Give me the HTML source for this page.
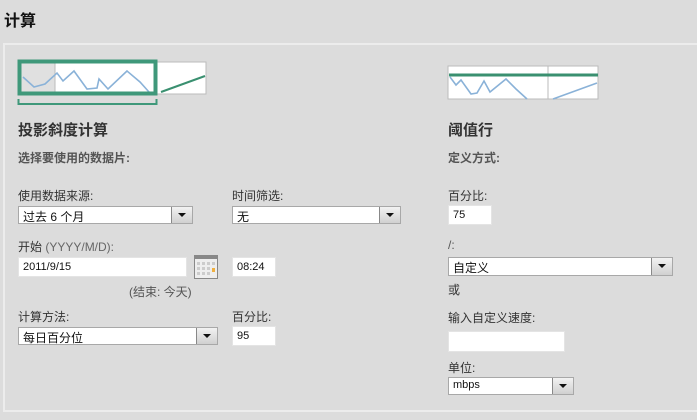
<!DOCTYPE html>
<html><head><meta charset="utf-8"><style>
body{margin:0;width:697px;height:420px;background:#dcdcdc;font-family:"Liberation Sans","Noto Sans CJK SC",sans-serif;position:relative;overflow:hidden;color:#222}
.a{position:absolute;white-space:nowrap}
.l{font-size:12px;color:#333}
.b{font-weight:bold}
.inp{position:absolute;background:#fff;border:1px solid #e4e4e4;box-sizing:border-box;font-size:11px;padding:3px 0 0 4px;color:#111}
.sel{position:absolute;background:#fff;border:1px solid #a8a8a8;box-sizing:border-box;font-size:12px;padding:1px 0 0 4px;color:#111}
.sel .btn{position:absolute;right:0;top:0;bottom:0;width:20px;background:linear-gradient(#f2f2f2,#d0d0d0);border-left:1px solid #888}
.sel .btn:after{content:"";position:absolute;left:6px;top:6px;border-left:4px solid transparent;border-right:4px solid transparent;border-top:4px solid #111}
</style></head><body>
<div class="a b" style="left:4px;top:7px;font-size:16px;color:#111">计算</div>
<div class="a" style="left:3px;top:43px;width:700px;height:365px;border:2px solid #ececec;border-right:none"></div>

<svg class="a" style="left:17px;top:59px" width="192" height="48">
<rect x="1" y="3" width="188" height="32" fill="#fff" stroke="#bbb"/>
<rect x="4" y="3" width="34" height="31" fill="#e0e0e0"/>
<line x1="38" y1="3" x2="38" y2="34" stroke="#bbb"/>
<polyline points="6,18 17,28 28,25 40,14 46,22 57,12 70,30 80,29 82,20 91,30 110,12 123,23 132,33" fill="none" stroke="#8ab2d8" stroke-width="1.6"/>
<line x1="144" y1="33" x2="188" y2="17" stroke="#3a9070" stroke-width="2"/>
<rect x="2.5" y="2.5" width="136" height="32" fill="none" stroke="#3f987a" stroke-width="4"/>
<polyline points="1.5,40 1.5,45 139.5,45 139.5,40" fill="none" stroke="#3f987a" stroke-width="2"/>
</svg>
<div class="a b" style="left:18px;top:119px;font-size:15px;color:#333">投影斜度计算</div>
<div class="a b" style="left:18px;top:149px;font-size:12px;color:#555">选择要使用的数据片:</div>
<div class="a l" style="left:18px;top:187px">使用数据来源:</div>
<div class="sel" style="left:18px;top:206px;width:175px;height:18px">过去 6 个月<div class="btn"></div></div>
<div class="a l" style="left:232px;top:187px">时间筛选:</div>
<div class="sel" style="left:232px;top:206px;width:169px;height:18px">无<div class="btn"></div></div>
<div class="a l" style="left:18px;top:238px">开始 <span style="color:#666">(YYYY/M/D):</span></div>
<div class="inp" style="left:18px;top:257px;width:169px;height:20px">2011/9/15</div>
<svg class="a" style="left:194px;top:255px" width="24" height="24"><rect width="24" height="24" fill="#888"/><rect x="1" y="4" width="22" height="19" fill="#eee"/><g fill="#ccc"><rect x="3" y="7" width="3" height="3"/><rect x="8" y="7" width="3" height="3"/><rect x="13" y="7" width="3" height="3"/><rect x="18" y="7" width="3" height="3"/><rect x="3" y="12" width="3" height="3"/><rect x="8" y="12" width="3" height="3"/><rect x="13" y="12" width="3" height="3"/><rect x="3" y="17" width="3" height="3"/><rect x="8" y="17" width="3" height="3"/><rect x="13" y="17" width="3" height="3"/></g><rect x="18" y="13" width="3" height="4" fill="#f0b040"/></svg>
<div class="inp" style="left:232px;top:257px;width:44px;height:20px">08:24</div>
<div class="a l" style="left:129px;top:283px;color:#555">(结束: 今天)</div>
<div class="a l" style="left:18px;top:308px">计算方法:</div>
<div class="sel" style="left:18px;top:327px;width:200px;height:18px">每日百分位<div class="btn"></div></div>
<div class="a l" style="left:232px;top:308px">百分比:</div>
<div class="inp" style="left:232px;top:326px;width:44px;height:20px">95</div>

<svg class="a" style="left:447px;top:65px" width="153" height="36">
<rect x="1" y="1" width="150" height="33" fill="#fff" stroke="#bbb"/>
<line x1="101" y1="1" x2="101" y2="34" stroke="#bbb"/>
<polyline points="3,12 9,20 14,15 24,29 30,28 37,16 43,27 59,14 69,24 80,34" fill="none" stroke="#8ab2d8" stroke-width="1.6"/>
<line x1="106" y1="34" x2="150" y2="18" stroke="#8ab2d8" stroke-width="1.6"/>
<line x1="2" y1="10" x2="151" y2="10" stroke="#3a9070" stroke-width="3"/>
</svg>
<div class="a b" style="left:448px;top:119px;font-size:15px;color:#333">阈值行</div>
<div class="a b" style="left:448px;top:149px;font-size:12px;color:#555">定义方式:</div>
<div class="a l" style="left:448px;top:187px">百分比:</div>
<div class="inp" style="left:448px;top:205px;width:44px;height:20px">75</div>
<div class="a l" style="left:448px;top:238px;color:#555">/:</div>
<div class="sel" style="left:448px;top:257px;width:225px;height:19px">自定义<div class="btn"></div></div>
<div class="a l" style="left:448px;top:281px">或</div>
<div class="a l" style="left:448px;top:309px">输入自定义速度:</div>
<div class="inp" style="left:448px;top:331px;width:117px;height:21px"></div>
<div class="a l" style="left:448px;top:359px">单位:</div>
<div class="sel" style="left:448px;top:377px;width:126px;height:18px;font-size:11px">mbps<div class="btn"></div></div>
</body></html>
